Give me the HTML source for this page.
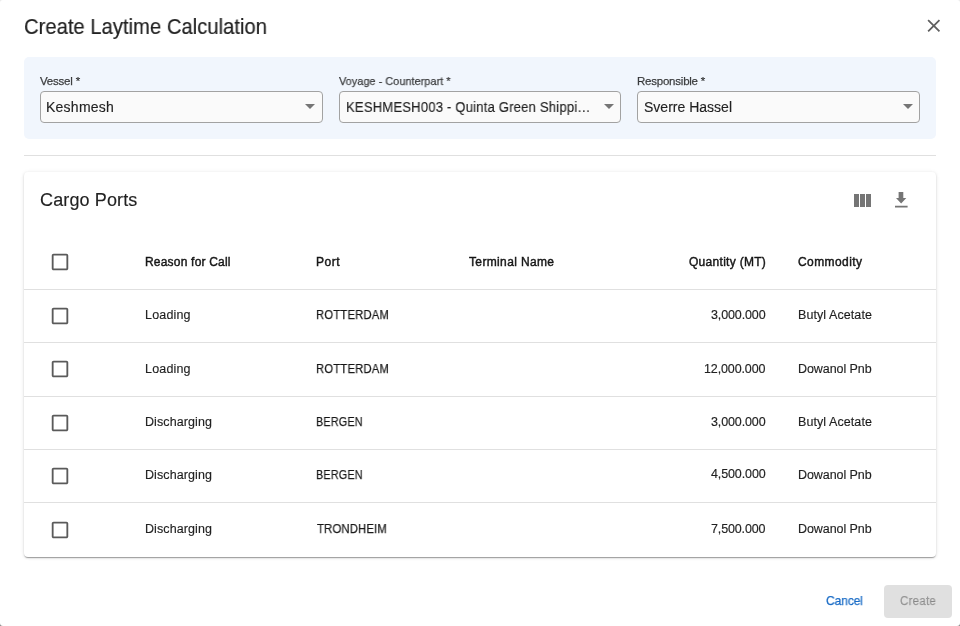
<!DOCTYPE html>
<html><head><meta charset="utf-8">
<style>
*{box-sizing:border-box;margin:0;padding:0}
html,body{width:960px;height:626px;overflow:hidden;font-family:"Liberation Sans",sans-serif}
body{background:linear-gradient(#ececec,#8a8a8a)}
#dlg{position:absolute;left:0;top:0;width:960px;height:626px;background:#fff;border-radius:3px;overflow:hidden}
.abs{position:absolute}
#panel{left:24px;top:57px;width:912px;height:82px;background:#f1f6fd;border-radius:5px}
.sel{top:91px;height:32px;border:1px solid #a2a2a2;border-radius:4px;background:#fafafa}
.arrow{top:104px;width:0;height:0;border-left:5px solid transparent;border-right:5px solid transparent;border-top:5px solid #757575}
#divider{left:24px;top:155px;width:912px;height:1px;background:#e0e0e0}
#card{left:24px;top:172px;width:912px;height:385px;background:#fff;border-radius:4px;box-shadow:0 2px 1px -1px rgba(0,0,0,0.2),0 1px 1px 0 rgba(0,0,0,0.14),0 1px 3px 0 rgba(0,0,0,0.12),0 0 5px rgba(0,0,0,0.05)}
.rowline{left:24px;width:912px;height:1px;background:#e0e0e0}
#create{left:884px;top:585px;width:68px;height:33px;background:#e0e0e0;border-radius:4px}
</style></head><body><div id="dlg">
<svg class="abs" style="left:922.6px;top:15.4px;width:21.6px;height:21.6px" viewBox="0 0 24 24"><path fill="#616161" d="M19 6.41 17.59 5 12 10.59 6.41 5 5 6.41 10.59 12 5 17.59 6.41 19 12 13.41 17.59 19 19 17.59 13.41 12z"/></svg>
<div id="panel" class="abs"></div>
<div class="abs sel" style="left:40px;width:283px"></div>
<div class="abs sel" style="left:339px;width:282px"></div>
<div class="abs sel" style="left:637px;width:283px"></div>
<div class="abs arrow" style="left:305px"></div>
<div class="abs arrow" style="left:604px"></div>
<div class="abs arrow" style="left:903px"></div>
<div id="divider" class="abs"></div>
<div id="card" class="abs"></div>
<svg class="abs" style="left:850px;top:189px;width:24px;height:24px" viewBox="0 0 24 24"><path fill="#757575" d="M10 18h5V5h-5v13zm-6 0h5V5H4v13zM16 5v13h5V5h-5z"/></svg>
<svg class="abs" style="left:889px;top:188px;width:24px;height:24px" viewBox="0 0 24 24"><path fill="#757575" d="M9.6 3.9h4.7v6.2h3L12.15 15.6 7 10.1h2.6z M6 17.8h12.6v1.8H6z"/></svg>
<svg class="abs" style="left:49.25px;top:251.25px;width:22.00px;height:22.00px" viewBox="0 0 24 24"><path fill="#5a5a5a" d="M19 5v14H5V5h14m0-2H5c-1.1 0-2 .9-2 2v14c0 1.1.9 2 2 2h14c1.1 0 2-.9 2-2V5c0-1.1-.9-2-2-2z"/></svg>
<svg class="abs" style="left:49.25px;top:305.25px;width:22.00px;height:22.00px" viewBox="0 0 24 24"><path fill="#5a5a5a" d="M19 5v14H5V5h14m0-2H5c-1.1 0-2 .9-2 2v14c0 1.1.9 2 2 2h14c1.1 0 2-.9 2-2V5c0-1.1-.9-2-2-2z"/></svg>
<svg class="abs" style="left:49.25px;top:358.05px;width:22.00px;height:22.00px" viewBox="0 0 24 24"><path fill="#5a5a5a" d="M19 5v14H5V5h14m0-2H5c-1.1 0-2 .9-2 2v14c0 1.1.9 2 2 2h14c1.1 0 2-.9 2-2V5c0-1.1-.9-2-2-2z"/></svg>
<svg class="abs" style="left:49.25px;top:412.15px;width:22.00px;height:22.00px" viewBox="0 0 24 24"><path fill="#5a5a5a" d="M19 5v14H5V5h14m0-2H5c-1.1 0-2 .9-2 2v14c0 1.1.9 2 2 2h14c1.1 0 2-.9 2-2V5c0-1.1-.9-2-2-2z"/></svg>
<svg class="abs" style="left:49.25px;top:465.45px;width:22.00px;height:22.00px" viewBox="0 0 24 24"><path fill="#5a5a5a" d="M19 5v14H5V5h14m0-2H5c-1.1 0-2 .9-2 2v14c0 1.1.9 2 2 2h14c1.1 0 2-.9 2-2V5c0-1.1-.9-2-2-2z"/></svg>
<svg class="abs" style="left:49.25px;top:518.65px;width:22.00px;height:22.00px" viewBox="0 0 24 24"><path fill="#5a5a5a" d="M19 5v14H5V5h14m0-2H5c-1.1 0-2 .9-2 2v14c0 1.1.9 2 2 2h14c1.1 0 2-.9 2-2V5c0-1.1-.9-2-2-2z"/></svg>
<div class="abs rowline" style="top:289px"></div>
<div class="abs rowline" style="top:342px"></div>
<div class="abs rowline" style="top:396px"></div>
<div class="abs rowline" style="top:449px"></div>
<div class="abs rowline" style="top:502px"></div>
<div id="create" class="abs"></div>
<div id="t0" style="position:absolute;left:23.77px;top:16.81px;font-size:21.50px;line-height:21.50px;font-weight:400;color:rgba(0,0,0,0.87);white-space:nowrap;letter-spacing:0.009px;transform:scaleX(0.9400);transform-origin:0 0;will-change:transform;-webkit-text-stroke:0.2px rgba(0,0,0,0.87)">Create Laytime Calculation</div>
<div id="t1" style="position:absolute;left:39.62px;top:75.81px;font-size:11.50px;line-height:11.50px;font-weight:400;color:rgba(0,0,0,0.72);white-space:nowrap;letter-spacing:-0.204px;will-change:transform;-webkit-text-stroke:0.25px rgba(0,0,0,0.72)">Vessel *</div>
<div id="t2" style="position:absolute;left:338.97px;top:75.82px;font-size:11.50px;line-height:11.50px;font-weight:400;color:rgba(0,0,0,0.72);white-space:nowrap;letter-spacing:0.019px;transform:scaleX(0.9500);transform-origin:0 0;will-change:transform;-webkit-text-stroke:0.25px rgba(0,0,0,0.72)">Voyage - Counterpart *</div>
<div id="t3" style="position:absolute;left:636.51px;top:75.68px;font-size:11.50px;line-height:11.50px;font-weight:400;color:rgba(0,0,0,0.72);white-space:nowrap;letter-spacing:-0.227px;will-change:transform;-webkit-text-stroke:0.25px rgba(0,0,0,0.72)">Responsible *</div>
<div id="t4" style="position:absolute;left:45.97px;top:99.83px;font-size:14.00px;line-height:14.00px;font-weight:400;color:rgba(0,0,0,0.87);white-space:nowrap;letter-spacing:0.250px;will-change:transform;-webkit-text-stroke:0.15px rgba(0,0,0,0.87)">Keshmesh</div>
<div id="t5" style="position:absolute;left:345.92px;top:99.64px;font-size:14.00px;line-height:14.00px;font-weight:400;color:rgba(0,0,0,0.87);white-space:nowrap;letter-spacing:0.228px;transform:scaleX(0.9300);transform-origin:0 0;will-change:transform;-webkit-text-stroke:0.15px rgba(0,0,0,0.87)">KESHMESH003 - Quinta Green Shippi…</div>
<div id="t6" style="position:absolute;left:643.83px;top:99.97px;font-size:14.00px;line-height:14.00px;font-weight:400;color:rgba(0,0,0,0.87);white-space:nowrap;letter-spacing:0.006px;will-change:transform;-webkit-text-stroke:0.15px rgba(0,0,0,0.87)">Sverre Hassel</div>
<div id="t7" style="position:absolute;left:39.83px;top:190.98px;font-size:18.00px;line-height:18.00px;font-weight:400;color:rgba(0,0,0,0.87);white-space:nowrap;letter-spacing:0.126px;will-change:transform;-webkit-text-stroke:0.15px rgba(0,0,0,0.87)">Cargo Ports</div>
<div id="t8" style="position:absolute;left:145.19px;top:255.64px;font-size:12.00px;line-height:12.00px;font-weight:400;color:rgba(0,0,0,0.87);white-space:nowrap;letter-spacing:0.200px;will-change:transform;-webkit-text-stroke:0.45px rgba(0,0,0,0.87)">Reason for Call</div>
<div id="t9" style="position:absolute;left:315.86px;top:255.64px;font-size:12.00px;line-height:12.00px;font-weight:400;color:rgba(0,0,0,0.87);white-space:nowrap;letter-spacing:0.507px;will-change:transform;-webkit-text-stroke:0.45px rgba(0,0,0,0.87)">Port</div>
<div id="t10" style="position:absolute;left:468.85px;top:255.65px;font-size:12.00px;line-height:12.00px;font-weight:400;color:rgba(0,0,0,0.87);white-space:nowrap;letter-spacing:0.356px;will-change:transform;-webkit-text-stroke:0.45px rgba(0,0,0,0.87)">Terminal Name</div>
<div id="t11" style="position:absolute;left:688.67px;top:255.96px;font-size:12.00px;line-height:12.00px;font-weight:400;color:rgba(0,0,0,0.87);white-space:nowrap;letter-spacing:0.290px;will-change:transform;-webkit-text-stroke:0.45px rgba(0,0,0,0.87)">Quantity (MT)</div>
<div id="t12" style="position:absolute;left:797.79px;top:255.70px;font-size:12.00px;line-height:12.00px;font-weight:400;color:rgba(0,0,0,0.87);white-space:nowrap;letter-spacing:0.413px;will-change:transform;-webkit-text-stroke:0.45px rgba(0,0,0,0.87)">Commodity</div>
<div id="t13" style="position:absolute;left:144.63px;top:308.79px;font-size:12.50px;line-height:12.50px;font-weight:400;color:rgba(0,0,0,0.87);white-space:nowrap;letter-spacing:0.181px;will-change:transform;-webkit-text-stroke:0.15px rgba(0,0,0,0.87)">Loading</div>
<div id="t14" style="position:absolute;left:315.82px;top:308.84px;font-size:12.50px;line-height:12.50px;font-weight:400;color:rgba(0,0,0,0.87);white-space:nowrap;letter-spacing:0.218px;transform:scaleX(0.9000);transform-origin:0 0;will-change:transform;-webkit-text-stroke:0.25px rgba(0,0,0,0.87)">ROTTERDAM</div>
<div id="t15" style="position:absolute;left:710.53px;top:308.88px;font-size:12.50px;line-height:12.50px;font-weight:400;color:rgba(0,0,0,0.87);white-space:nowrap;letter-spacing:-0.127px;will-change:transform;-webkit-text-stroke:0.15px rgba(0,0,0,0.87)">3,000.000</div>
<div id="t16" style="position:absolute;left:797.83px;top:308.79px;font-size:12.50px;line-height:12.50px;font-weight:400;color:rgba(0,0,0,0.87);white-space:nowrap;letter-spacing:0.078px;will-change:transform;-webkit-text-stroke:0.15px rgba(0,0,0,0.87)">Butyl Acetate</div>
<div id="t17" style="position:absolute;left:144.63px;top:362.99px;font-size:12.50px;line-height:12.50px;font-weight:400;color:rgba(0,0,0,0.87);white-space:nowrap;letter-spacing:0.181px;will-change:transform;-webkit-text-stroke:0.15px rgba(0,0,0,0.87)">Loading</div>
<div id="t18" style="position:absolute;left:315.82px;top:362.54px;font-size:12.50px;line-height:12.50px;font-weight:400;color:rgba(0,0,0,0.87);white-space:nowrap;letter-spacing:0.218px;transform:scaleX(0.9000);transform-origin:0 0;will-change:transform;-webkit-text-stroke:0.25px rgba(0,0,0,0.87)">ROTTERDAM</div>
<div id="t19" style="position:absolute;left:703.67px;top:362.57px;font-size:12.50px;line-height:12.50px;font-weight:400;color:rgba(0,0,0,0.87);white-space:nowrap;letter-spacing:-0.124px;will-change:transform;-webkit-text-stroke:0.15px rgba(0,0,0,0.87)">12,000.000</div>
<div id="t20" style="position:absolute;left:797.83px;top:362.99px;font-size:12.50px;line-height:12.50px;font-weight:400;color:rgba(0,0,0,0.87);white-space:nowrap;letter-spacing:-0.075px;will-change:transform;-webkit-text-stroke:0.15px rgba(0,0,0,0.87)">Dowanol Pnb</div>
<div id="t21" style="position:absolute;left:144.63px;top:415.99px;font-size:12.50px;line-height:12.50px;font-weight:400;color:rgba(0,0,0,0.87);white-space:nowrap;letter-spacing:0.088px;will-change:transform;-webkit-text-stroke:0.15px rgba(0,0,0,0.87)">Discharging</div>
<div id="t22" style="position:absolute;left:315.63px;top:415.91px;font-size:12.50px;line-height:12.50px;font-weight:400;color:rgba(0,0,0,0.87);white-space:nowrap;letter-spacing:0.257px;transform:scaleX(0.8600);transform-origin:0 0;will-change:transform;-webkit-text-stroke:0.25px rgba(0,0,0,0.87)">BERGEN</div>
<div id="t23" style="position:absolute;left:710.53px;top:415.57px;font-size:12.50px;line-height:12.50px;font-weight:400;color:rgba(0,0,0,0.87);white-space:nowrap;letter-spacing:-0.127px;will-change:transform;-webkit-text-stroke:0.15px rgba(0,0,0,0.87)">3,000.000</div>
<div id="t24" style="position:absolute;left:797.83px;top:415.99px;font-size:12.50px;line-height:12.50px;font-weight:400;color:rgba(0,0,0,0.87);white-space:nowrap;letter-spacing:0.078px;will-change:transform;-webkit-text-stroke:0.15px rgba(0,0,0,0.87)">Butyl Acetate</div>
<div id="t25" style="position:absolute;left:144.63px;top:468.89px;font-size:12.50px;line-height:12.50px;font-weight:400;color:rgba(0,0,0,0.87);white-space:nowrap;letter-spacing:0.088px;will-change:transform;-webkit-text-stroke:0.15px rgba(0,0,0,0.87)">Discharging</div>
<div id="t26" style="position:absolute;left:315.63px;top:468.81px;font-size:12.50px;line-height:12.50px;font-weight:400;color:rgba(0,0,0,0.87);white-space:nowrap;letter-spacing:0.257px;transform:scaleX(0.8600);transform-origin:0 0;will-change:transform;-webkit-text-stroke:0.25px rgba(0,0,0,0.87)">BERGEN</div>
<div id="t27" style="position:absolute;left:711.30px;top:467.54px;font-size:12.50px;line-height:12.50px;font-weight:400;color:rgba(0,0,0,0.87);white-space:nowrap;letter-spacing:-0.115px;will-change:transform;-webkit-text-stroke:0.15px rgba(0,0,0,0.87)">4,500.000</div>
<div id="t28" style="position:absolute;left:797.83px;top:468.89px;font-size:12.50px;line-height:12.50px;font-weight:400;color:rgba(0,0,0,0.87);white-space:nowrap;letter-spacing:-0.075px;will-change:transform;-webkit-text-stroke:0.15px rgba(0,0,0,0.87)">Dowanol Pnb</div>
<div id="t29" style="position:absolute;left:144.63px;top:522.69px;font-size:12.50px;line-height:12.50px;font-weight:400;color:rgba(0,0,0,0.87);white-space:nowrap;letter-spacing:0.088px;will-change:transform;-webkit-text-stroke:0.15px rgba(0,0,0,0.87)">Discharging</div>
<div id="t30" style="position:absolute;left:316.69px;top:522.97px;font-size:12.50px;line-height:12.50px;font-weight:400;color:rgba(0,0,0,0.87);white-space:nowrap;letter-spacing:0.126px;transform:scaleX(0.9100);transform-origin:0 0;will-change:transform;-webkit-text-stroke:0.25px rgba(0,0,0,0.87)">TRONDHEIM</div>
<div id="t31" style="position:absolute;left:710.50px;top:522.98px;font-size:12.50px;line-height:12.50px;font-weight:400;color:rgba(0,0,0,0.87);white-space:nowrap;letter-spacing:-0.132px;will-change:transform;-webkit-text-stroke:0.15px rgba(0,0,0,0.87)">7,500.000</div>
<div id="t32" style="position:absolute;left:797.83px;top:522.69px;font-size:12.50px;line-height:12.50px;font-weight:400;color:rgba(0,0,0,0.87);white-space:nowrap;letter-spacing:-0.075px;will-change:transform;-webkit-text-stroke:0.15px rgba(0,0,0,0.87)">Dowanol Pnb</div>
<div id="t33" style="position:absolute;left:825.86px;top:593.81px;font-size:13.00px;line-height:13.00px;font-weight:400;color:#1a6cc6;white-space:nowrap;letter-spacing:-0.144px;transform:scaleX(0.9300);transform-origin:0 0;will-change:transform;-webkit-text-stroke:0.25px #1a6cc6">Cancel</div>
<div id="t34" style="position:absolute;left:899.88px;top:594.96px;font-size:12.50px;line-height:12.50px;font-weight:400;color:rgba(0,0,0,0.30);white-space:nowrap;letter-spacing:0.199px;transform:scaleX(0.9300);transform-origin:0 0;will-change:transform;-webkit-text-stroke:0.25px rgba(0,0,0,0.30)">Create</div>
</div></body></html>
